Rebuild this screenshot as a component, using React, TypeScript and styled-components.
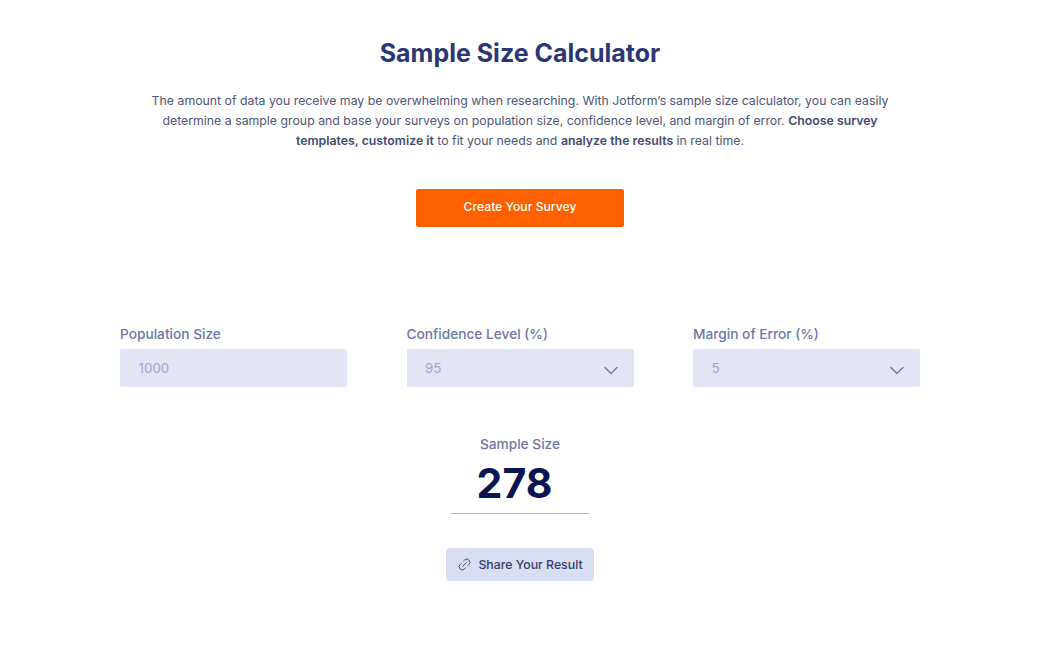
import React from "react";
import styled, { createGlobalStyle } from "styled-components";
import { Link2 } from "lucide-react";

const Global = createGlobalStyle`
  html, body { margin: 0; padding: 0; background: #fff; }
  body { font-family: Inter, "Liberation Sans", sans-serif; -webkit-font-smoothing: antialiased; }
`;

const Page = styled.main`
  width: 1040px;
  height: 650px;
  overflow: hidden;
  display: flex;
  flex-direction: column;
  align-items: center;
  padding-top: 36px;
  box-sizing: border-box;
`;

const Title = styled.h1`
  margin: 0;
  font-size: 25px;
  line-height: 34px;
  font-weight: 700;
  color: #2b3674;
  letter-spacing: 0;
`;

const Intro = styled.p`
  margin: 21px 0 0;
  width: 760px;
  font-size: 12.32px;
  line-height: 20px;
  text-align: center;
  color: #4f5573;
  b { font-weight: 600; color: #434a6b; }
`;

const Cta = styled.button`
  margin-top: 37.5px;
  width: 208px;
  height: 38px;
  padding: 0 0 2px;
  border: 0;
  border-radius: 2px;
  background: #ff6100;
  color: #fff;
  font: 500 12.2px Inter, sans-serif;
`;

const Fields = styled.section`
  margin-top: 96.5px;
  width: 800px;
  display: grid;
  grid-template-columns: repeat(3, 227px);
  justify-content: space-between;
`;

const Field = styled.div`
  display: flex;
  flex-direction: column;
`;

const Label = styled.label`
  font-size: 13.7px;
  line-height: 20px;
  font-weight: 500;
  color: #6f76a7;
  padding-top: 1px;
  margin-bottom: 5px;
`;

const Control = styled.div`
  height: 38px;
  padding: 0 15px 0 18.5px;
  box-sizing: border-box;
  display: flex;
  align-items: center;
  justify-content: space-between;
  background: #e3e5f5;
  border-radius: 2px;
  font-size: 13.4px;
  color: #9ea3cf;
`;

const Chevron = styled.svg`
  width: 16px;
  height: 10px;
  margin-top: 4px;
  fill: none;
  stroke: #6f76a7;
  stroke-width: 1.3;
`;

const Result = styled.section`
  margin-top: 47px;
  display: flex;
  flex-direction: column;
  align-items: center;
`;

const ResultLabel = styled.div`
  font-size: 13.7px;
  line-height: 20px;
  font-weight: 500;
  color: #6f76a7;
`;

const Value = styled.div`
  margin-top: 5px;
  width: 138px;
  height: 55px;
  padding-right: 11px;
  box-sizing: border-box;
  border-bottom: 1px solid #aeb3d8;
  text-align: center;
  font-size: 41px;
  line-height: 48px;
  font-weight: 700;
  color: #0a1551;
`;

const Share = styled.button`
  margin-top: 34px;
  width: 148px;
  height: 33px;
  padding: 0;
  border: 0;
  border-radius: 4px;
  background: #dadef3;
  color: #343c6a;
  font: 500 12.3px Inter, sans-serif;
  display: flex;
  align-items: center;
  justify-content: center;
  gap: 6px;
`;

const LinkIcon = styled(Link2)`
  transform: rotate(-45deg);
  color: #434a6b;
`;

const ChevronIcon = () => (
  <Chevron viewBox="0 0 16 10"><path d="M1.5 2 8 8.5 14.5 2" /></Chevron>
);

export default function App() {
  return (
    <Page>
      <Global />
      <Title>Sample Size Calculator</Title>
      <Intro>
        The amount of data you receive may be overwhelming when researching. With Jotform’s sample size calculator, you can easily<br />
        determine a sample group and base your surveys on population size, confidence level, and margin of error. <b>Choose survey</b><br />
        <b>templates, customize it</b> to fit your needs and <b>analyze the results</b> in real time.
      </Intro>
      <Cta>Create Your Survey</Cta>
      <Fields>
        <Field>
          <Label>Population Size</Label>
          <Control>1000</Control>
        </Field>
        <Field>
          <Label>Confidence Level (%)</Label>
          <Control>95<ChevronIcon /></Control>
        </Field>
        <Field>
          <Label>Margin of Error (%)</Label>
          <Control>5<ChevronIcon /></Control>
        </Field>
      </Fields>
      <Result>
        <ResultLabel>Sample Size</ResultLabel>
        <Value>278</Value>
        <Share><LinkIcon size={15} strokeWidth={1.5} />Share Your Result</Share>
      </Result>
    </Page>
  );
}
